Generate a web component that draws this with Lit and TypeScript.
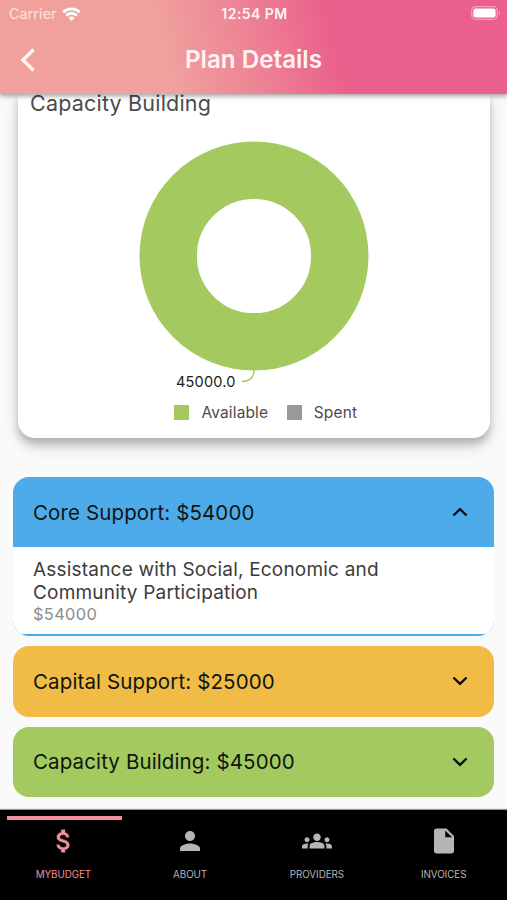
import { LitElement, html, css, svg } from "lit";
import { customElement, property } from "lit/decorators.js";

const chevron = (up: boolean) => html`<svg class="chev" viewBox="0 0 16 10" width="16" height="10">
  <path d=${up ? "M1.4 8.5 8 2.1 14.6 8.5" : "M1.4 1.5 8 7.9 14.6 1.5"} fill="none" stroke="#0b0f12" stroke-width="2.4" />
</svg>`;

@customElement("plan-header")
class PlanHeader extends LitElement {
  static styles = css`
    :host { display: flex; flex-direction: column; height: 94px; color: #fff4f2; position: relative; z-index: 2;
      background: linear-gradient(76deg, #f0a19d 33%, #ed8094 51%, #ea5f8c 66%);
      box-shadow: 0 2px 5px rgba(0,0,0,.38); }
    .status { display: grid; grid-template-columns: 1fr auto 1fr; align-items: center; height: 26px; padding: 0 6px 0 9px; font-size: 14.2px; }
    .carrier { display: flex; align-items: center; gap: 5px; letter-spacing: .15px; color: #fde3df; padding-top: 1px; }
    .time { font-weight: 600; font-size: 14px; letter-spacing: .45px; padding-top: 1px; margin-right: 1px; }
    .battery { justify-self: end; display: block; }
    .bar { display: grid; grid-template-columns: 60px 1fr 60px; align-items: center; height: 67px; }
    .back { margin-left: 20px; display: block; }
    .title { text-align: center; font-size: 24.2px; font-weight: 600; letter-spacing: 0; }
  `;
  render() {
    return html`
      <div class="status">
        <span class="carrier">Carrier
          <svg width="19" height="14" viewBox="0 0 19 14" fill="none" stroke="#fff" stroke-width="2.7">
            <path d="M1.2 5.2A12 12 0 0 1 17.8 5.2M4.2 8.4A7.7 7.7 0 0 1 14.8 8.4" />
            <path d="M9.5 14 6.3 10.7A4.6 4.6 0 0 1 12.7 10.7Z" fill="#fff" stroke="none" />
          </svg>
        </span>
        <span class="time">12:54 PM</span>
        <svg class="battery" width="30" height="14" viewBox="0 0 30 14">
          <rect x=".7" y=".7" width="25.6" height="12.6" rx="4" fill="none" stroke="#fff" stroke-opacity=".42" stroke-width="1.2" />
          <rect x="2.4" y="2.4" width="22.2" height="9.2" rx="2.3" fill="#fff" />
          <path d="M28 4.7Q30 7 28 9.3Z" fill="#fff" fill-opacity=".45" />
        </svg>
      </div>
      <div class="bar">
        <svg class="back" width="16" height="24" viewBox="0 0 16 24"><path d="M13.6 1.4 3 12 13.6 22.6" fill="none" stroke="#fff4f2" stroke-width="3.5" /></svg>
        <span class="title">Plan Details</span>
      </div>`;
  }
}

@customElement("budget-card")
class BudgetCard extends LitElement {
  static styles = css`
    :host { display: block; height: 343.5px; margin: 0 17px 0 18px; background: #fff; border-radius: 0 0 17px 17px;
      box-shadow: 0 6px 7px rgba(0,0,0,.17), 0 8px 15px rgba(0,0,0,.16); }
    .name { height: 18px; line-height: 18px; padding-left: 12px; font-size: 21.5px; letter-spacing: .2px; color: #4c4c4c; }
    .chart { display: block; width: 472px; height: 287px; }
    .label { font-size: 14.5px; letter-spacing: .2px; fill: #222; }
    .legend { display: flex; align-items: center; height: 20px; padding-left: 156.4px; font-size: 15.5px; letter-spacing: .15px; color: #4c4c4c; margin-top: 3.4px; }
    .swatch { width: 15px; height: 15px; margin-right: 12px; }
    .available { background: #a3c95f; }
    .spent { background: #999; margin-left: 18.5px; }
  `;
  render() {
    return html`
      <div class="name">Capacity Building</div>
      <svg class="chart" viewBox="0 0 472 287">
        <circle cx="236" cy="144" r="85.8" fill="none" stroke="#a3c95f" stroke-width="57.4" />
        <path d="M236 258Q236 269 224 269.5" fill="none" stroke="#a3c95f" stroke-width="1.4" />
        <text class="label" x="158" y="275">45000.0</text>
      </svg>
      <div class="legend">
        <span class="swatch available"></span><span>Available</span>
        <span class="swatch spent"></span><span>Spent</span>
      </div>`;
  }
}

@customElement("support-panel")
class SupportPanel extends LitElement {
  @property() tone = "";
  @property() label = "";
  @property({ type: Boolean }) open = false;
  static styles = css`
    :host { display: block; }
    .panel { border-radius: 16px; overflow: hidden; }
    .blue { background: #4dabea; }
    .amber { background: #f1bc46; }
    .green { background: #a3c95f; }
    .head { display: flex; align-items: center; justify-content: space-between; height: 70.5px; padding: 0 26.5px 0 20px; font-size: 20.5px; letter-spacing: .12px; color: #101512; box-sizing: border-box; }
    .blue .head { height: 70px; padding-top: 1px; }
    .body { background: #fff; height: 87.5px; margin-bottom: 2px; padding: 11px 20px 0; box-sizing: border-box; }
    .chev { display: block; }
  `;
  render() {
    return html`<div class="panel ${this.tone}">
      <div class="head"><span>${this.label}</span>${chevron(this.open)}</div>
      ${this.open ? html`<div class="body"><slot></slot></div>` : null}
    </div>`;
  }
}

const tabs = [
  { name: "MYBUDGET", icon: svg`<path d="M11.8 10.9c-2.27-.59-3-1.2-3-2.15 0-1.09 1.01-1.85 2.7-1.85 1.78 0 2.44.85 2.5 2.1h2.21c-.07-1.72-1.12-3.3-3.21-3.81V3h-3v2.16c-1.94.42-3.5 1.68-3.5 3.61 0 2.31 1.91 3.46 4.7 4.13 2.5.6 3 1.48 3 2.41 0 .69-.49 1.79-2.7 1.79-2.06 0-2.87-.92-2.98-2.1h-2.2c.12 2.19 1.76 3.42 3.68 3.83V21h3v-2.15c1.95-.37 3.5-1.5 3.5-3.55 0-2.84-2.43-3.81-4.7-4.4z" stroke="currentColor" stroke-width=".3" transform="translate(.6 0)"/>` },
  { name: "ABOUT", icon: svg`<path d="M12 12c2.21 0 4-1.79 4-4s-1.79-4-4-4-4 1.79-4 4 1.79 4 4 4zm0 2c-2.67 0-8 1.34-8 4v2h16v-2c0-2.66-5.33-4-8-4z"/>` },
  { name: "PROVIDERS", icon: svg`<path d="M12 12.75c1.63 0 3.07.39 4.24.9 1.08.48 1.76 1.56 1.76 2.73V18H6v-1.61c0-1.18.68-2.26 1.76-2.73 1.17-.52 2.61-.91 4.24-.91zM4 13c1.1 0 2-.9 2-2s-.9-2-2-2-2 .9-2 2 .9 2 2 2zm1.13 1.1c-.37-.06-.74-.1-1.13-.1-.99 0-1.93.21-2.78.58C.48 14.9 0 15.62 0 16.43V18h4.5v-1.61c0-.83.23-1.61.63-2.29zM20 13c1.1 0 2-.9 2-2s-.9-2-2-2-2 .9-2 2 .9 2 2 2zm4 3.43c0-.81-.48-1.53-1.22-1.85-.85-.37-1.79-.58-2.78-.58-.39 0-.76.04-1.13.1.4.68.63 1.46.63 2.29V18H24v-1.57zM12 6c1.66 0 3 1.34 3 3s-1.34 3-3 3-3-1.34-3-3 1.34-3 3-3z"/>` },
  { name: "INVOICES", icon: svg`<path d="M6 2c-1.1 0-1.99.9-1.99 2L4 20c0 1.1.89 2 1.99 2H18c1.1 0 2-.9 2-2V8l-6-6H6zm7 7V3.5L18.5 9H13z"/>` },
];

@customElement("tab-bar")
class TabBar extends LitElement {
  static styles = css`
    :host { display: grid; grid-template-columns: repeat(4, 1fr); height: 90px; background: #000; box-shadow: 0 -1px 1px rgba(0,0,0,.4); }
    .tab { display: flex; flex-direction: column; align-items: center; color: #b5b5b5; font-size: 9.8px; letter-spacing: -.05px; }
    .active { color: #f38e9e; }
    .mark { width: 114.5px; height: 4px; margin: 5.5px 0 6.5px 7px; align-self: flex-start; }
    .active .mark { background: #f38e9e; }
    .icon { width: 30px; height: 30px; fill: currentColor; margin-bottom: 11.5px; }
    .name { line-height: 14px; }
  `;
  render() {
    return html`${tabs.map((t, i) => html`<div class="tab ${i === 0 ? "active" : ""}">
      <span class="mark"></span>
      <svg class="icon" viewBox="0 0 24 24" width="30" height="30">${t.icon}</svg>
      <span class="name">${t.name}</span></div>`)}`;
  }
}

@customElement("app-root")
class AppRoot extends LitElement {
  static styles = css`
    :host { display: flex; flex-direction: column; height: 900px; overflow: hidden; background: #fafafa; font-family: Inter, "Liberation Sans", sans-serif; }
    .list { display: flex; flex-direction: column; gap: 10px; padding: 39px 12.6px 0 13px; flex: 1; }
    .item { font-size: 19px; line-height: 23px; letter-spacing: .2px; color: #3c3c3c; }
    .amount { font-size: 16.4px; line-height: 21px; letter-spacing: .35px; color: #8c8c8c; }
  `;
  render() {
    return html`
      <plan-header></plan-header>
      <budget-card></budget-card>
      <div class="list">
        <support-panel tone="blue" label="Core Support: $54000" open>
          <div class="item">Assistance with Social, Economic and<br />Community Participation</div>
          <div class="amount">$54000</div>
        </support-panel>
        <support-panel tone="amber" label="Capital Support: $25000"></support-panel>
        <support-panel tone="green" label="Capacity Building: $45000"></support-panel>
      </div>
      <tab-bar></tab-bar>`;
  }
}
